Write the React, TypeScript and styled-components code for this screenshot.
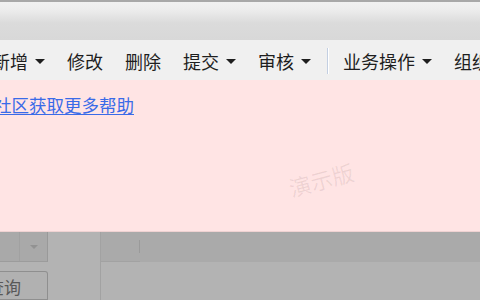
import React from "react";
import styled, { createGlobalStyle } from "styled-components";

const Global = createGlobalStyle`
  html, body { margin: 0; padding: 0; }
  body {
    width: 480px;
    height: 300px;
    overflow: hidden;
    font-family: "Noto Sans CJK SC", "Noto Sans", sans-serif;
  }
`;

const Page = styled.div`
  display: flex;
  flex-direction: column;
  width: 480px;
  height: 300px;
  overflow: hidden;
`;

const TitleBar = styled.div`
  height: 38px;
  border-top: 2px solid #a8a8a8;
  background: linear-gradient(#f1f1f1 0%, #ececec 22%, #dbdbdb 55%, #d8d8d8 100%);
`;

const Toolbar = styled.div`
  height: 40px;
  background: #f0f0f0;
  display: flex;
  align-items: center;
  padding-top: 2px;
  box-sizing: border-box;
  margin-left: -19px;
  white-space: nowrap;
`;

const ToolItem = styled.div`
  display: flex;
  align-items: center;
  flex: none;
  padding: 0 11px;
  font-size: 18px;
  line-height: 22px;
  color: #1e1e1e;
`;

const Caret = styled.span`
  width: 0;
  height: 0;
  margin-left: 7px;
  border-left: 5px solid transparent;
  border-right: 5px solid transparent;
  border-top: 5px solid #1e1e1e;
`;

const Separator = styled.div`
  flex: none;
  width: 1px;
  height: 26px;
  margin: 0 3px 0 5px;
  background: #c3cfe2;
  border-right: 1px solid #ffffff;
`;

const Notice = styled.div`
  position: relative;
  background: #ffe4e4;
  border-bottom: 1px solid #efd2d2;
  padding-top: 13px;
  height: 138px;
`;

const HelpLink = styled.a`
  display: inline-block;
  margin-left: -6px;
  font-size: 17.5px;
  line-height: 20px;
  color: #3a6be8;
  text-decoration: underline;
  text-underline-offset: 2px;
  cursor: pointer;
`;

const Watermark = styled.div`
  position: absolute;
  left: 288px;
  top: 86px;
  font-size: 22px;
  line-height: 26px;
  color: rgba(70, 30, 30, 0.09);
  transform: rotate(-15deg);
  transform-origin: center;
  user-select: none;
`;

const Bottom = styled.div`
  flex: 1;
  display: flex;
  background: #b3b3b3;
`;

const LeftCol = styled.div`
  width: 48px;
  flex: none;
  display: flex;
  flex-direction: column;
`;

const Combo = styled.div`
  height: 29px;
  display: flex;
  background: #a9a9a9;
  border-right: 1px solid #999999;
  border-bottom: 1px solid #9c9c9c;
`;

const ComboField = styled.div`
  width: 19px;
  border-right: 1px solid #a1a1a1;
`;

const ComboArrow = styled.div`
  flex: 1;
  display: flex;
  align-items: center;
  justify-content: center;
  &::after {
    content: "";
    width: 0;
    height: 0;
    border-left: 4px solid transparent;
    border-right: 4px solid transparent;
    border-top: 4px solid #929292;
  }
`;

const QueryButton = styled.div`
  margin-top: 9px;
  flex: 1;
  display: flex;
  align-items: center;
  justify-content: flex-end;
  padding-right: 26px;
  padding-top: 2px;
  background: #b1b1b1;
  border: 1px solid #8f8f8f;
  border-left: none;
  border-radius: 0 3px 0 0;
  font-size: 17px;
  line-height: 20px;
  color: #585858;
  white-space: nowrap;
  overflow: hidden;
`;

const Gutter = styled.div`
  width: 52px;
  flex: none;
  border-right: 1px solid #a2a2a2;
`;

const RightCol = styled.div`
  flex: 1;
  display: flex;
  flex-direction: column;
`;

const HeaderBand = styled.div`
  height: 30px;
  display: flex;
  background: #aaaaaa;
`;

const HeaderCell = styled.div`
  width: 39px;
  height: 30px;
  box-sizing: border-box;
  border-bottom: 1px solid #a2a2a2;
  display: flex;
  align-items: center;
  justify-content: flex-end;
  &::after {
    content: "";
    width: 1px;
    height: 13px;
    margin-bottom: 1px;
    background: #9a9a9a;
  }
`;

const tools: { label: string; caret?: boolean; sepBefore?: boolean }[] = [
  { label: "新增", caret: true },
  { label: "修改" },
  { label: "删除" },
  { label: "提交", caret: true },
  { label: "审核", caret: true },
  { label: "业务操作", caret: true, sepBefore: true },
  { label: "组织" },
];

export default function App() {
  return (
    <Page>
      <Global />
      <TitleBar />
      <Toolbar>
        {tools.map((t) => (
          <React.Fragment key={t.label}>
            {t.sepBefore && <Separator />}
            <ToolItem>
              {t.label}
              {t.caret && <Caret />}
            </ToolItem>
          </React.Fragment>
        ))}
      </Toolbar>
      <Notice>
        <HelpLink>社区获取更多帮助</HelpLink>
        <Watermark>演示版</Watermark>
      </Notice>
      <Bottom>
        <LeftCol>
          <Combo>
            <ComboField />
            <ComboArrow />
          </Combo>
          <QueryButton>查询</QueryButton>
        </LeftCol>
        <Gutter />
        <RightCol>
          <HeaderBand>
            <HeaderCell />
          </HeaderBand>
        </RightCol>
      </Bottom>
    </Page>
  );
}
